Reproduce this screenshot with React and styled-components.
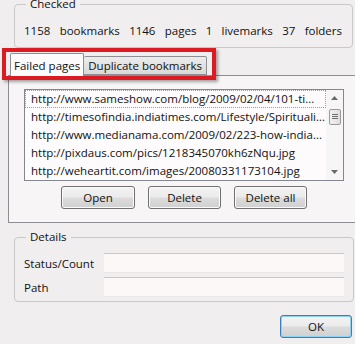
import React from 'react';
import styled, { createGlobalStyle } from 'styled-components';

const GlobalStyle = createGlobalStyle`
  html, body {
    margin: 0;
    padding: 0;
    background: #f0eeee;
    overflow: hidden;
  }
  body {
    font-family: "Open Sans", "Noto Sans", sans-serif;
    font-size: 11.5px;
    color: #111;
  }
`;

const Dialog = styled.div`
  position: relative;
  width: 355px;
  height: 344px;
  padding: 0 0 0 8px;
  box-sizing: border-box;
  overflow: hidden;
`;

const Group = styled.fieldset`
  margin: ${(p) => p.$margin || '0'};
  padding: ${(p) => p.$padding || '0 8px'};
  border: 1px solid #c9c9cb;
  border-radius: 4px;
  box-sizing: border-box;
  width: 339px;
  height: ${(p) => p.$height};
`;

const Legend = styled.legend`
  padding: 0 4px 0 4px;
  margin-left: 2px;
  line-height: 14px;
`;

const Stats = styled.div`
  display: flex;
  justify-content: space-between;
  margin-top: 12px;
  padding-right: 1px;
`;

const TabStrip = styled.div`
  display: flex;
  align-items: flex-end;
  margin: 5px 0 0 2px;
  height: 22px;
  position: relative;
  z-index: 1;
`;

const Tab = styled.div`
  box-sizing: border-box;
  height: ${(p) => (p.$active ? '23px' : '19px')};
  padding: ${(p) => (p.$active ? '0 3px' : '0 4px')};
  margin-bottom: ${(p) => (p.$active ? '-1px' : '0')};
  display: flex;
  align-items: center;
  border: 1px solid #8c8e94;
  border-bottom: ${(p) => (p.$active ? 'none' : '1px solid #8c8e94')};
  border-left: ${(p) => (p.$active ? '1px solid #8c8e94' : 'none')};
  background: ${(p) => (p.$active ? '#fbfbfb' : 'linear-gradient(#ececec, #d9d9d9)')};
  border-radius: 2px 2px 0 0;
  white-space: nowrap;
`;

const Panel = styled.div`
  box-sizing: border-box;
  height: 148px;
  margin-right: -4px;
  border: 1px solid #8c8e94;
  border-right: none;
  background: #f7f5f5;
  padding: 13px 0 0 15px;
`;

const ListBox = styled.div`
  box-sizing: border-box;
  width: 320px;
  height: 92px;
  border: 1px solid #828790;
  background: #fdfbfb;
  display: flex;
`;

const Rows = styled.div`
  flex: 1;
  overflow: hidden;
`;

const Row = styled.div`
  box-sizing: border-box;
  height: 18px;
  line-height: 16px;
  padding-left: 5px;
  white-space: nowrap;
  overflow: hidden;
  border: 1px ${(p) => (p.$focus ? 'dotted #7aa6d4' : 'solid transparent')};
`;

const ScrollBar = styled.div`
  width: 17px;
  display: flex;
  flex-direction: column;
  align-items: center;
  background: #f7f6f6;
  padding: 6px 0 6px;
  box-sizing: border-box;
`;

const Spacer = styled.div`
  flex: 1;
`;

const Thumb = styled.div`
  width: 12px;
  height: 16px;
  margin-top: 9px;
  box-sizing: border-box;
  border: 1px solid #9a9a9a;
  border-radius: 2px;
  background: linear-gradient(90deg, #f2f2f2, #dedede);
  display: flex;
  align-items: center;
  justify-content: center;
`;

const ButtonRow = styled.div`
  display: flex;
  justify-content: center;
  gap: 13px;
  width: 320px;
  margin-top: 5px;
`;

const Button = styled.button`
  font: inherit;
  color: #111;
  box-sizing: border-box;
  width: ${(p) => p.$width || '73px'};
  height: 23px;
  padding: 0;
  border: 1px solid ${(p) => (p.$default ? '#3c7fb1' : '#707070')};
  border-radius: 3px;
  background: linear-gradient(#f3f3f3 0%, #ebebeb 48%, #dcdcdc 52%, #d0d0d0 100%);
  box-shadow: inset 0 0 0 1px ${(p) => (p.$default ? '#8fd1f2' : '#fbfbfb')};
`;

const FieldRow = styled.div`
  display: flex;
  align-items: center;
  margin-top: ${(p) => p.$top || '4px'};
`;

const FieldLabel = styled.span`
  width: 80px;
`;

const TextBox = styled.div`
  box-sizing: border-box;
  width: 240px;
  height: 20px;
  background: #fdf8f8;
  border-top: 1px solid #c9c7c7;
  border-bottom: 1px solid #ebe8e8;
`;

const Footer = styled.div`
  display: flex;
  justify-content: flex-end;
  padding-right: 3px;
  margin-top: 13px;
`;

const Highlight = styled.div`
  position: absolute;
  left: 2px;
  top: 48px;
  width: 214px;
  height: 32px;
  box-sizing: border-box;
  border: 4px solid #dc1a22;
  box-shadow: 2px 2px 3px rgba(0, 0, 0, 0.35);
  pointer-events: none;
`;

const stats = ['1158', 'bookmarks', '1146', 'pages', '1', 'livemarks', '37', 'folders'];

const urls = [
  'http://www.sameshow.com/blog/2009/02/04/101-ti...',
  'http://timesofindia.indiatimes.com/Lifestyle/Spirituali...',
  'http://www.medianama.com/2009/02/223-how-india...',
  'http://pixdaus.com/pics/1218345070kh6zNqu.jpg',
  'http://weheartit.com/images/20080331173104.jpg',
];

const Arrow = ({ up }) => (
  <svg width="7" height="4" viewBox="0 0 7 4">
    <path d={up ? 'M0 4 L3.5 0 L7 4 Z' : 'M0 0 L3.5 4 L7 0 Z'} fill="#6a6a6a" />
  </svg>
);

const Grip = () => (
  <svg width="6" height="6" viewBox="0 0 6 6">
    <path d="M0 0.5 H6 M0 2.5 H6 M0 4.5 H6" stroke="#6f6f6f" strokeWidth="1" />
  </svg>
);

const App = () => (
  <Dialog>
    <GlobalStyle />
    <Group $margin="-3px 0 0 6px" $height="51px" $padding="0 9px">
      <Legend>Checked</Legend>
      <Stats>
        {stats.map((s) => (
          <span key={s}>{s}</span>
        ))}
      </Stats>
    </Group>

    <TabStrip>
      <Tab $active>Failed pages</Tab>
      <Tab>Duplicate bookmarks</Tab>
    </TabStrip>
    <Panel>
      <ListBox>
        <Rows>
          {urls.map((u, i) => (
            <Row key={u} $focus={i === 0}>
              {u}
            </Row>
          ))}
        </Rows>
        <ScrollBar>
          <Arrow up />
          <Thumb>
            <Grip />
          </Thumb>
          <Spacer />
          <Arrow />
        </ScrollBar>
      </ListBox>
      <ButtonRow>
        <Button $width="74px">Open</Button>
        <Button>Delete</Button>
        <Button>Delete all</Button>
      </ButtonRow>
    </Panel>

    <Group $margin="7px 0 0 6px" $height="72px" $padding="0 9px">
      <Legend>Details</Legend>
      <FieldRow $top="9px">
        <FieldLabel>Status/Count</FieldLabel>
        <TextBox />
      </FieldRow>
      <FieldRow>
        <FieldLabel>Path</FieldLabel>
        <TextBox />
      </FieldRow>
    </Group>

    <Footer>
      <Button $default $width="72px">
        OK
      </Button>
    </Footer>

    <Highlight />
  </Dialog>
);

export default App;
